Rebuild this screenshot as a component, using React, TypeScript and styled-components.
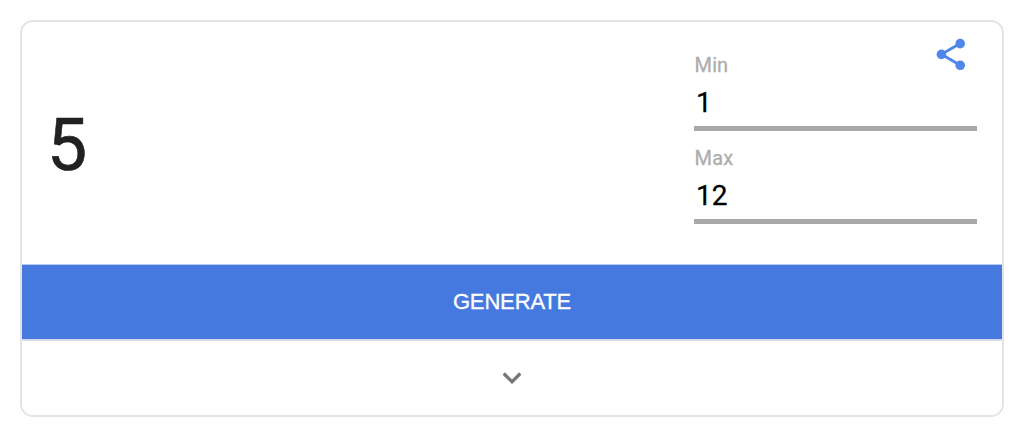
import React, { useState } from 'react';
import styled, { createGlobalStyle } from 'styled-components';

const GlobalStyle = createGlobalStyle`
  * {
    box-sizing: border-box;
  }
  body {
    margin: 0;
    background: #fff;
    font-family: Roboto, sans-serif;
  }
`;

const Page = styled.div`
  height: 425px;
  padding: 20px 20px 0;
`;

const Card = styled.div`
  display: flex;
  flex-direction: column;
  width: 984px;
  height: 397px;
  border: 2px solid #e4e4e7;
  border-radius: 13px;
  overflow: hidden;
`;

const Top = styled.div`
  display: flex;
  height: 242px;
  padding: 0 25px 0 25px;
`;

const Result = styled.div`
  flex: 1;
  align-self: center;
  padding-top: 5px;
  font-size: 71.5px;
  line-height: 84px;
  color: #212121;
  -webkit-text-stroke: 0.6px #212121;
`;

const Fields = styled.div`
  position: relative;
  width: 283px;
  padding-top: 31px;
`;

const Field = styled.label`
  display: block;
  height: 93px;
  color: #adadad;
  font-size: 20px;
  line-height: 25px;
  letter-spacing: 0.1px;
  text-indent: 0.6px;
  -webkit-text-stroke: 0.3px #adadad;
`;

const Input = styled.input`
  display: block;
  width: 100%;
  height: 53px;
  padding: 0 2px;
  border: none;
  border-bottom: 5px solid #a8a8a8;
  border-radius: 0;
  background: transparent;
  color: #000;
  font-family: inherit;
  font-size: 28px;
  -webkit-text-stroke: 0.3px #000;
  outline: none;
`;

const ShareButton = styled.button`
  position: absolute;
  top: 14px;
  right: 8px;
  width: 36px;
  height: 36px;
  padding: 0;
  border: none;
  background: none;
  color: #4f86ec;
  cursor: pointer;

  svg {
    display: block;
  }
`;

const GenerateButton = styled.button`
  height: 77px;
  padding: 0;
  border: solid;
  border-width: 1px 0 2px;
  border-color: #b5caf2 transparent #d3d8e6;
  background: #4679df;
  background-clip: padding-box;
  color: #fff;
  font-family: 'Liberation Sans', sans-serif;
  font-size: 22px;
  letter-spacing: -0.15px;
  -webkit-text-stroke: 0.3px #fff;
  cursor: pointer;
`;

const ExpandButton = styled.button`
  display: flex;
  flex: 1;
  align-items: center;
  justify-content: center;
  padding: 0;
  border: none;
  background: #fff;
  color: #757575;
  cursor: pointer;
`;

export default function App() {
  const [min, setMin] = useState('1');
  const [max, setMax] = useState('12');
  const [result, setResult] = useState(5);

  const generate = () => {
    const low = Number(min);
    const high = Number(max);
    setResult(Math.floor(Math.random() * (high - low + 1)) + low);
  };

  return (
    <Page>
      <GlobalStyle />
      <Card>
        <Top>
          <Result>{result}</Result>
          <Fields>
            <Field>
              Min
              <Input value={min} onChange={(e) => setMin(e.target.value)} />
            </Field>
            <Field>
              Max
              <Input value={max} onChange={(e) => setMax(e.target.value)} />
            </Field>
            <ShareButton aria-label="Share">
              <svg width="36" height="36" viewBox="0 0 36 36">
                <path d="M27.2 7.5L8.4 18.3l18.8 11" fill="none" stroke="currentColor" strokeWidth="2.8" />
                <circle cx="27.2" cy="7.6" r="4.8" fill="currentColor" />
                <circle cx="8.4" cy="18.4" r="4.8" fill="currentColor" />
                <circle cx="27.2" cy="29.3" r="4.8" fill="currentColor" />
              </svg>
            </ShareButton>
          </Fields>
        </Top>
        <GenerateButton onClick={generate}>GENERATE</GenerateButton>
        <ExpandButton aria-label="Expand">
          <svg width="20" height="12" viewBox="0 0 20 12">
            <path d="M1.7 1.5L10 9.8l8.3-8.3" fill="none" stroke="currentColor" strokeWidth="3.2" />
          </svg>
        </ExpandButton>
      </Card>
    </Page>
  );
}
